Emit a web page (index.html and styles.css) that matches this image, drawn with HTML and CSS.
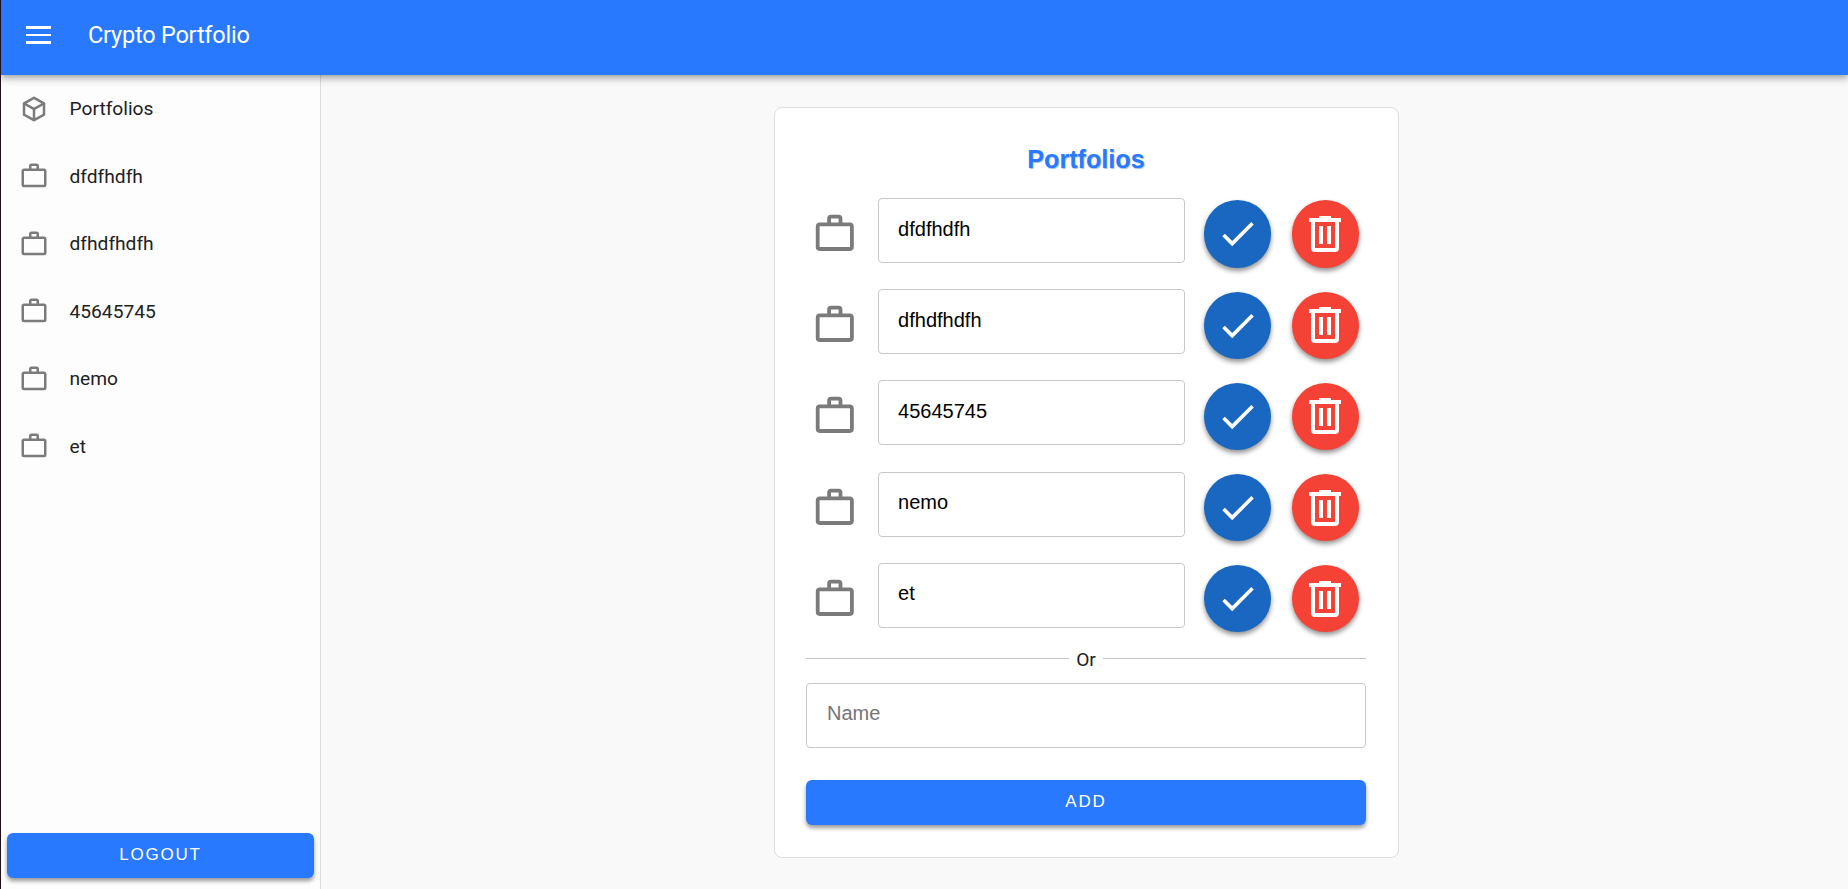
FILE: index.html
```html
<!DOCTYPE html>
<html lang="en">
<head>
<meta charset="utf-8">
<title>Crypto Portfolio</title>
<link rel="stylesheet" href="styles.css">
</head>
<body>
<svg class="sprite" aria-hidden="true">
  <symbol id="briefcase" viewBox="0 0 24 24"><path d="M20,6H16V4A2,2 0 0,0 14,2H10A2,2 0 0,0 8,4V6H4C2.89,6 2,6.89 2,8V19A2,2 0 0,0 4,21H20A2,2 0 0,0 22,19V8C22,6.89 21.1,6 20,6M10,4H14V6H10V4M20,19H4V8H20V19Z"/></symbol>
  <symbol id="cube" viewBox="0 0 24 24"><path d="M21,16.5C21,16.88 20.79,17.21 20.47,17.38L12.57,21.82C12.41,21.94 12.21,22 12,22C11.79,22 11.59,21.94 11.43,21.82L3.53,17.38C3.21,17.21 3,16.88 3,16.5V7.5C3,7.12 3.21,6.79 3.53,6.62L11.43,2.18C11.59,2.06 11.79,2 12,2C12.21,2 12.41,2.06 12.57,2.18L20.47,6.62C20.79,6.79 21,7.12 21,7.5V16.5M12,4.15L6.04,7.5L12,10.85L17.96,7.5L12,4.15M5,15.91L11,19.29V12.58L5,9.21V15.91M19,15.91V9.21L13,12.58V19.29L19,15.91Z"/></symbol>
  <symbol id="check" viewBox="0 0 24 24"><path d="M21,7L9,19L3.5,13.5L4.91,12.09L9,16.17L19.59,5.59L21,7Z"/></symbol>
  <symbol id="trash" viewBox="0 0 24 24"><path d="M9,3V4H4V6H5V19A2,2 0 0,0 7,21H17A2,2 0 0,0 19,19V6H20V4H15V3H9M7,6H17V19H7V6M9,8V17H11V8H9M13,8V17H15V8H13Z"/></symbol>
</svg>
<div class="app">
  <header class="topbar">
    <svg class="menu-icon" viewBox="0 0 25 18"><path d="M0,0H25V3H0ZM0,8H25V10H0ZM0,15H25V18H0Z"/></svg>
    <span class="app-title">Crypto Portfolio</span>
  </header>
  <div class="body">
    <aside class="drawer">
      <nav class="nav">
        <a class="nav-item"><svg class="nav-icon"><use href="#cube"/></svg><span>Portfolios</span></a>
        <a class="nav-item"><svg class="nav-icon"><use href="#briefcase"/></svg><span>dfdfhdfh</span></a>
        <a class="nav-item"><svg class="nav-icon"><use href="#briefcase"/></svg><span>dfhdfhdfh</span></a>
        <a class="nav-item"><svg class="nav-icon"><use href="#briefcase"/></svg><span>45645745</span></a>
        <a class="nav-item"><svg class="nav-icon"><use href="#briefcase"/></svg><span>nemo</span></a>
        <a class="nav-item"><svg class="nav-icon"><use href="#briefcase"/></svg><span>et</span></a>
      </nav>
      <button class="btn">LOGOUT</button>
    </aside>
    <main class="content">
      <section class="card">
        <h1 class="card-title">Portfolios</h1>
        <div class="rows">
          <div class="row"><svg class="row-icon"><use href="#briefcase"/></svg><div class="field">dfdfhdfh</div><button class="fab save"><svg><use href="#check"/></svg></button><button class="fab remove"><svg><use href="#trash"/></svg></button></div>
          <div class="row"><svg class="row-icon"><use href="#briefcase"/></svg><div class="field">dfhdfhdfh</div><button class="fab save"><svg><use href="#check"/></svg></button><button class="fab remove"><svg><use href="#trash"/></svg></button></div>
          <div class="row"><svg class="row-icon"><use href="#briefcase"/></svg><div class="field">45645745</div><button class="fab save"><svg><use href="#check"/></svg></button><button class="fab remove"><svg><use href="#trash"/></svg></button></div>
          <div class="row"><svg class="row-icon"><use href="#briefcase"/></svg><div class="field">nemo</div><button class="fab save"><svg><use href="#check"/></svg></button><button class="fab remove"><svg><use href="#trash"/></svg></button></div>
          <div class="row"><svg class="row-icon"><use href="#briefcase"/></svg><div class="field">et</div><button class="fab save"><svg><use href="#check"/></svg></button><button class="fab remove"><svg><use href="#trash"/></svg></button></div>
        </div>
        <div class="divider"><span>Or</span></div>
        <div class="field field-new">Name</div>
        <button class="btn">ADD</button>
      </section>
    </main>
  </div>
</div>
</body>
</html>
```
FILE: styles.css
```css
* { box-sizing: border-box; }
body {
  margin: 0;
  font-family: Roboto, "Noto Sans", sans-serif;
  font-size: 19.2px;
  color: #212121;
  background: #f9f9f9;
}
svg { display: block; flex: none; fill: currentColor; }
.sprite { display: none; }
.app {
  height: 100vh;
  display: flex;
  flex-direction: column;
  border-left: 1px solid #210e1b;
  overflow: hidden;
}
.topbar {
  position: relative;
  z-index: 1;
  flex: none;
  height: 75px;
  padding: 0 25px 5px;
  display: flex;
  align-items: center;
  gap: 37px;
  color: #fff;
  background: #2979ff;
  box-shadow: 0 2px 5px -1px rgba(0,0,0,.2), 0 5px 6px rgba(0,0,0,.14), 0 1px 12px rgba(0,0,0,.12);
}
.menu-icon { width: 25px; height: 18px; }
.app-title { font-size: 23.5px; line-height: 30px; letter-spacing: -.22px; }
.body { flex: 1; display: flex; min-height: 0; }
.drawer {
  width: 320px;
  padding: 0 6px 11px;
  display: flex;
  flex-direction: column;
  justify-content: space-between;
  background: #fdfdfd;
  border-right: 1px solid #dcdcdc;
}
.nav { display: flex; flex-direction: column; }
.nav-item {
  height: 67.5px;
  padding-left: 12px;
  display: flex;
  align-items: center;
  gap: 20.5px;
}
.nav-icon { width: 30px; height: 30px; color: #7b7b7b; }
.btn {
  width: 100%;
  height: 45px;
  padding: 0 0 1px;
  border: 0;
  border-radius: 6px;
  font: 17px "Liberation Sans", sans-serif;
  letter-spacing: 1.8px;
  color: #fff;
  background: #2979ff;
  box-shadow: 0 3px 4px rgba(0,0,0,.4);
}
.content {
  flex: 1;
  display: flex;
  justify-content: center;
  align-items: flex-start;
  padding: 32px 0 0 4px;
}
.card {
  width: 625px;
  height: 751px;
  padding: 37px 32px 0 31px;
  border: 1px solid #dedede;
  border-radius: 8px;
  background: #fff;
}
.card-title {
  margin: 0;
  height: 30px;
  font: bold 25.2px/29px "Liberation Sans", sans-serif;
  text-align: center;
  color: #2979ff;
  text-shadow: 1px 1px 1px #a9bfd3;
}
.rows { padding-top: 23px; }
.row { height: 91.2px; display: flex; align-items: flex-start; }
.row-icon { width: 45.6px; height: 45.6px; margin: 13px 20px 0 6px; color: #7b7b7b; }
.field {
  width: 307px;
  height: 65px;
  padding: 0 0 3px 19.5px;
  display: flex;
  align-items: center;
  border: 1px solid #c8c8c8;
  border-radius: 4px;
  font-family: "Liberation Sans", sans-serif;
  font-size: 20px;
  color: #000;
}
.fab {
  width: 67.5px;
  height: 67.2px;
  margin: 2.4px 0 0 19px;
  padding: 0;
  border: 0;
  border-radius: 50%;
  display: flex;
  align-items: center;
  justify-content: center;
  color: #fff;
  box-shadow: 0 3px 5px rgba(0,0,0,.43);
}
.save { background: #1967c0; }
.save svg { width: 43.2px; height: 43.2px; }
.remove { margin-left: 20.5px; background: #f44336; }
.remove svg { width: 48px; height: 48px; }
.divider {
  height: 29px;
  padding-bottom: 19px;
  display: flex;
  align-items: center;
  gap: 7px;
  line-height: 24px;
}
.divider span { padding-top: 2px; }
.divider::before, .divider::after { content: ""; flex: 1; height: 1px; background: #c4c4c4; }
.field-new { width: 100%; padding-left: 20px; color: #757575; }
.field-new + .btn { display: block; margin-top: 32px; }
```
